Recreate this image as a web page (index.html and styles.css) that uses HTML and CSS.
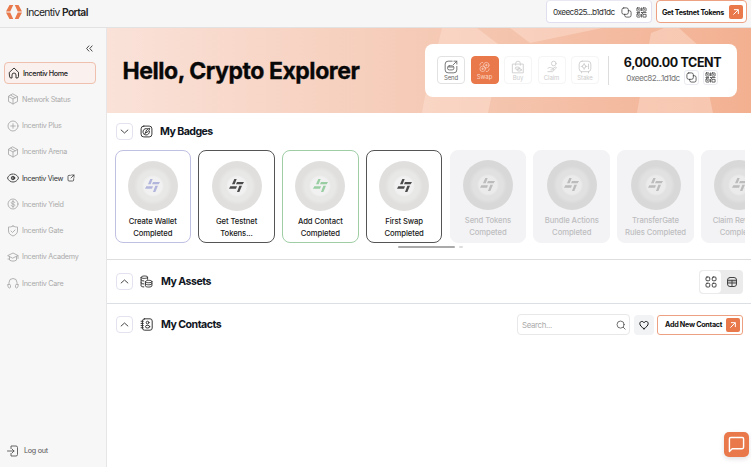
FILE: index.html
```html
<!DOCTYPE html>
<html lang="en">
<head>
<meta charset="utf-8">
<title>Incentiv Portal</title>
<link rel="stylesheet" href="styles.css">
</head>
<body>
<svg class="defs" aria-hidden="true">
  <symbol id="cube" viewBox="0 0 24 24"><path d="M12 2l9 5v10l-9 5-9-5V7zM3 7l9 5 9-5M12 12v10M7.500 4.500l9 5"/></symbol>
  <symbol id="home" viewBox="0 0 24 24"><path d="M3 10.500L12 2l9 8.500V19a3 3 0 0 1-3 3h-2v-6a4 4 0 0 0-8 0v6H6a3 3 0 0 1-3-3z"/></symbol>
  <symbol id="plus" viewBox="0 0 24 24"><circle cx="12" cy="12" r="10"/><path d="M12 7.500v9M7.500 12h9"/></symbol>
  <symbol id="eye" viewBox="0 0 24 24"><path d="M1 12c2-5 6-8 11-8s9 3 11 8c-2 5-6 8-11 8S3 17 1 12z" stroke-dasharray="15 2"/><circle cx="12" cy="12" r="3.500"/><circle cx="12" cy="12" r="1"/></symbol>
  <symbol id="dollar" viewBox="0 0 24 24"><circle cx="12" cy="12" r="10"/><path d="M15.500 9c-.5-1.500-2-2-3.500-2-2 0-3.500 1-3.500 2.500 0 3.500 7 1.500 7 5 0 1.500-1.500 2.500-3.500 2.500s-3.500-1-3.500-2.500M12 5v14"/></symbol>
  <symbol id="shield" viewBox="0 0 24 24"><path d="M12 2c3 2 6 2 9 2v8c0 5-4 8-9 10-5-2-9-5-9-10V4c3 0 6 0 9-2zM8 12l3 3 5-5"/></symbol>
  <symbol id="academy" viewBox="0 0 24 24"><path d="M2 9l10-5 10 5-10 5zM5 11v7c4 3 10 3 14 0v-7M22 9v6M2 16h3"/></symbol>
  <symbol id="care" viewBox="0 0 24 24"><path d="M4 15v-4a8 8 0 0 1 16 0v4M2 15h3c2 0 2 1 2 2v3c0 1-1 2-2 2s-3-1-3-3zM22 15h-3c-2 0-2 1-2 2v3c0 1 1 2 2 2s3-1 3-3z"/></symbol>
  <symbol id="external" viewBox="0 0 24 24"><path d="M10 4H6a3 3 0 0 0-3 3v11a3 3 0 0 0 3 3h11a3 3 0 0 0 3-3v-4M14 3h7v7M21 3l-9 9"/></symbol>
  <symbol id="logout" viewBox="0 0 24 24"><path d="M8 7V2h10a3 3 0 0 1 3 3v14a3 3 0 0 1-3 3H8v-5M1 12h13M10 8l4 4-4 4"/></symbol>
  <symbol id="copy" viewBox="0 0 24 24"><rect x="2" y="2" width="14" height="14" rx="4"/><path d="M16 8h2a4 4 0 0 1 4 4v6a4 4 0 0 1-4 4h-6a4 4 0 0 1-4-4v-2"/></symbol>
  <symbol id="qr" viewBox="0 0 24 24"><rect x="2" y="2" width="7" height="7" rx="1"/><rect x="15" y="2" width="7" height="7" rx="1"/><rect x="2" y="15" width="7" height="7" rx="1"/><path d="M12 2v6M12 12h10M2 12h6M12 16v6M16 16h6v6h-6zM5 5h1M18 5h1M5 18h1M12 12l3 3"/></symbol>
  <symbol id="arrow" viewBox="0 0 24 24"><path d="M5 19L18 6M7 5h12v12"/></symbol>
  <symbol id="down" viewBox="0 0 24 24"><path d="M3 8l9 8 9-8"/></symbol>
  <symbol id="up" viewBox="0 0 24 24"><path d="M3 16l9-8 9 8"/></symbol>
  <symbol id="collapse" viewBox="0 0 24 24"><path d="M10 3l-8 9 8 9M21 3l-8 9 8 9"/></symbol>
  <symbol id="badge" viewBox="0 0 24 24"><rect x="2" y="2" width="20" height="20" rx="5"/><path d="M14 7a6 6 0 1 0 3.500 5M8 17l3-3M10.500 14c0-4 3-7 7.500-8-1 5-4 8-7.500 8z"/></symbol>
  <symbol id="assets" viewBox="0 0 24 24"><path d="M2 4c0-3 12-3 12 0s-12 3-12 0v16c0 1 2 2 5 2M14 4v4M2 9c0 1 2 2 5 2M2 14.500c0 1 2 2 5 2"/><path d="M10 12c0-3 12-3 12 0s-12 3-12 0v8c0 3 12 3 12 0v-8M10 16c0 3 12 3 12 0"/></symbol>
  <symbol id="contacts" viewBox="0 0 24 24"><rect x="4.500" y="1.500" width="18" height="21" rx="4"/><path d="M2 6h4M2 10h4M2 14h4M2 18h4"/><circle cx="14" cy="8.500" r="2.500"/><ellipse cx="14" cy="16" rx="4" ry="2.500"/></symbol>
  <symbol id="grid" viewBox="0 0 24 24"><rect x="2" y="2" width="7.500" height="7.500" rx="2"/><rect x="14.500" y="2" width="7.500" height="7.500" rx="2"/><rect x="2" y="14.500" width="7.500" height="7.500" rx="2"/><rect x="14.500" y="14.500" width="7.500" height="7.500" rx="2"/></symbol>
  <symbol id="table" viewBox="0 0 24 24"><path d="M3 8h18v5H3z" fill="currentColor" fill-opacity=".3" stroke="none"/><rect x="3" y="3" width="18" height="18" rx="5"/><path d="M3 8.500h18M3 14h18M12 8.500V21"/></symbol>
  <symbol id="search" viewBox="0 0 24 24"><circle cx="11" cy="11" r="8.500"/><path d="M17.500 17.500L22 22"/></symbol>
  <symbol id="heart" viewBox="0 0 24 24"><path d="M12 21C6 17 2 13 2 8.500 2 3 9 1.500 12 6.500 15 1.500 22 3 22 8.500 22 13 18 17 12 21z"/></symbol>
  <symbol id="chat" viewBox="0 0 24 24"><path d="M2 22V4a2 2 0 0 1 2-2h16a2 2 0 0 1 2 2v12a2 2 0 0 1-2 2H6z"/></symbol>
  <symbol id="send" viewBox="0 0 24 24"><path d="M14 2H7a5 5 0 0 0-5 5v10a5 5 0 0 0 5 5h10a5 5 0 0 0 5-5v-6M16 8l6-6M17 2h5v5"/><rect x="6" y="10" width="11" height="7" rx="3"/><path d="M7 12h9"/></symbol>
  <symbol id="swap" viewBox="0 0 24 24"><circle cx="16" cy="8" r="6"/><circle cx="8" cy="16" r="6"/><path d="M2 8c0-4 2-6 6-6M16 22c4 0 6-2 6-6M14 8h4M6 16h4M16 6v4M8 14v4"/></symbol>
  <symbol id="buy" viewBox="0 0 24 24"><path d="M3 7h18v15H3zM8 9V6a4 4 0 0 1 8 0v3"/><ellipse cx="11" cy="14" rx="4" ry="2"/><ellipse cx="14" cy="17" rx="4" ry="2"/></symbol>
  <symbol id="claim" viewBox="0 0 24 24"><circle cx="15" cy="6" r="4"/><path d="M5 14c4-3 6 0 8 0s3 3 0 3h-3M13 15l5-3c2 0 2 2 0 3l-5 5H5"/></symbol>
  <symbol id="stake" viewBox="0 0 24 24"><rect x="2" y="2" width="20" height="18" rx="5"/><circle cx="10.500" cy="11" r="3"/><path d="M10.500 6v2M10.500 14v2M5.500 11h2M13.500 11h2M18 7v8M6 20v2M18 20v2"/></symbol>
  <symbol id="spark" viewBox="0 0 45 39"><path d="M16 0h7l-6 16h-8zM24 9h21l-4 7H21zM4 22h20l-3 7H0zM31 20h8l-8 19h-7z"/></symbol>
</svg>

<header class="topbar">
  <div class="brand">
    <svg class="brand-mark" viewBox="0 0 32 28"><path d="M7 0h7.500L8.500 13.200H0zM17.500 0H25l7 13.200h-8.500zM0 14.800h8.500l6 13.200H7zM23.500 14.800H32L25 28h-7.500z"/></svg>
    <span class="brand-name">Incentiv <b>Portal</b></span>
  </div>
  <div class="address-box"><span>0xeec825...b1d1dc</span><svg class="icon"><use href="#copy"/></svg><svg class="icon"><use href="#qr"/></svg></div>
  <button class="cta testnet"><span>Get Testnet Tokens</span><i><svg class="icon"><use href="#arrow"/></svg></i></button>
</header>

<div class="layout">
  <aside class="sidebar">
    <svg class="icon collapse"><use href="#collapse"/></svg>
    <nav>
      <a class="item active"><svg class="icon"><use href="#home"/></svg><span>Incentiv Home</span></a>
      <a class="item"><svg class="icon"><use href="#cube"/></svg><span>Network Status</span></a>
      <a class="item"><svg class="icon"><use href="#plus"/></svg><span>Incentiv Plus</span></a>
      <a class="item"><svg class="icon"><use href="#cube"/></svg><span>Incentiv Arena</span></a>
      <a class="item enabled"><svg class="icon"><use href="#eye"/></svg><span>Incentiv View</span><svg class="icon ext"><use href="#external"/></svg></a>
      <a class="item"><svg class="icon"><use href="#dollar"/></svg><span>Incentiv Yield</span></a>
      <a class="item"><svg class="icon"><use href="#shield"/></svg><span>Incentiv Gate</span></a>
      <a class="item"><svg class="icon"><use href="#academy"/></svg><span>Incentiv Academy</span></a>
      <a class="item"><svg class="icon"><use href="#care"/></svg><span>Incentiv Care</span></a>
    </nav>
    <a class="item logout"><svg class="icon"><use href="#logout"/></svg><span>Log out</span></a>
  </aside>

  <main>
    <section class="hero">
      <svg class="hero-art" viewBox="0 0 644 85" preserveAspectRatio="none"><path d="M335 0h35l25 19-14 66h-66l2-12zM403 0h92l-72 15zM557 0h15l20 18 14 67h-76l14-80z"/></svg>
      <h1>Hello, Crypto Explorer</h1>
      <div class="wallet">
        <div class="actions">
          <button class="action"><svg class="icon"><use href="#send"/></svg><span>Send</span></button>
          <button class="action primary"><svg class="icon"><use href="#swap"/></svg><span>Swap</span></button>
          <button class="action off"><svg class="icon"><use href="#buy"/></svg><span>Buy</span></button>
          <button class="action off"><svg class="icon"><use href="#claim"/></svg><span>Claim</span></button>
          <button class="action off"><svg class="icon"><use href="#stake"/></svg><span>Stake</span></button>
        </div>
        <div class="balance">
          <strong>6,000.00 TCENT</strong>
          <div class="balance-address"><span>0xeec82...1d1dc</span><i><svg class="icon"><use href="#copy"/></svg></i><i><svg class="icon"><use href="#qr"/></svg></i></div>
        </div>
      </div>
    </section>

    <section class="badges">
      <div class="section-head"><button class="toggle"><svg class="icon"><use href="#down"/></svg></button><svg class="icon title-icon"><use href="#badge"/></svg><h2>My Badges</h2></div>
      <div class="badge-row">
        <article class="card violet"><div class="medal"><svg><use href="#spark"/></svg></div><p>Create Wallet<br>Completed</p></article>
        <article class="card dark"><div class="medal"><svg><use href="#spark"/></svg></div><p>Get Testnet<br>Tokens...</p></article>
        <article class="card green"><div class="medal"><svg><use href="#spark"/></svg></div><p>Add Contact<br>Completed</p></article>
        <article class="card dark"><div class="medal"><svg><use href="#spark"/></svg></div><p>First Swap<br>Completed</p></article>
        <article class="card locked"><div class="medal"><svg><use href="#spark"/></svg></div><p>Send Tokens<br>Competed</p></article>
        <article class="card locked"><div class="medal"><svg><use href="#spark"/></svg></div><p>Bundle Actions<br>Completed</p></article>
        <article class="card locked"><div class="medal"><svg><use href="#spark"/></svg></div><p>TransferGate<br>Rules Completed</p></article>
        <article class="card locked"><div class="medal"><svg><use href="#spark"/></svg></div><p>Claim Rewards<br>Completed</p></article>
      </div>
      <div class="pager"><span></span><span class="dot"></span></div>
    </section>

    <section class="assets">
      <div class="section-head"><button class="toggle"><svg class="icon"><use href="#up"/></svg></button><svg class="icon title-icon"><use href="#assets"/></svg><h2>My Assets</h2></div>
      <div class="view-switch"><span class="on"><svg class="icon"><use href="#grid"/></svg></span><span><svg class="icon"><use href="#table"/></svg></span></div>
    </section>

    <section class="contacts">
      <div class="section-head"><button class="toggle"><svg class="icon"><use href="#up"/></svg></button><svg class="icon title-icon"><use href="#contacts"/></svg><h2>My Contacts</h2></div>
      <div class="search"><span>Search...</span><svg class="icon"><use href="#search"/></svg></div>
      <button class="favorite"><svg class="icon"><use href="#heart"/></svg></button>
      <button class="cta add"><span>Add New Contact</span><i><svg class="icon"><use href="#arrow"/></svg></i></button>
    </section>
  </main>
</div>
<button class="chat"><svg class="icon"><use href="#chat"/></svg></button>
</body>
</html>
```
FILE: styles.css
```css
* { box-sizing: border-box; }
body { margin: 0; width: 751px; height: 467px; overflow: hidden; display: flex; flex-direction: column; background: #fff; color: #111; font-family: Inter, "Liberation Sans", sans-serif; }
button { font: inherit; color: inherit; padding: 0; margin: 0; border: 0; background: none; }
h1, h2, p { margin: 0; }
span, strong, h1, h2 { white-space: nowrap; }
.defs { position: absolute; width: 0; height: 0; }
.icon { display: block; flex: none; width: 12px; height: 12px; fill: none; stroke: currentColor; stroke-width: 1.8; stroke-linecap: round; stroke-linejoin: round; }

.topbar { flex: none; height: 28px; display: flex; align-items: flex-start; padding-right: 4px; background: #f6f6f6; border-bottom: 1px solid #e2e2e2; }
.brand { display: flex; align-items: center; height: 23px; padding-left: 6px; gap: 4px; margin-right: auto; }
.brand-mark { width: 16px; height: 14px; fill: #e9784a; }
.brand-name { font-size: 10.300px; letter-spacing: -0.600px; color: #222; }
.brand-name b { font-weight: 600; }
.address-box { width: 106px; height: 23px; margin-right: 4px; padding: 1px 0 0 6px; display: flex; align-items: center; background: #fff; border: 1px solid #dfdff0; border-top-color: #e8e8f2; border-radius: 4px; font-size: 8.200px; letter-spacing: -0.600px; color: #333; }
.address-box span { width: 70px; }
.address-box .icon { width: 11px; height: 11px; margin-right: 4px; stroke-width: 1.600; }
.cta { display: flex; align-items: center; justify-content: space-between; background: #fff; border: 1px solid #eda182; border-radius: 4px; font-weight: 700; color: #111; }
.cta i { display: grid; place-items: center; width: 14px; height: 14px; background: #e9784a; color: #fff; border-radius: 2px; }
.cta .icon { width: 8px; height: 8px; stroke-width: 3; }
.testnet { width: 91px; height: 23px; padding: 1px 3px 0 5px; font-size: 7.200px; letter-spacing: -0.320px; }

.layout { flex: 1; display: flex; min-height: 0; }
.sidebar { flex: none; width: 107px; display: flex; flex-direction: column; background: #f7f7f7; border-right: 1px solid #e6e6e6; }
.collapse { width: 7px; height: 7px; margin: 17px 0 10px 86px; stroke-width: 3; color: #333; }
.item { display: flex; align-items: center; width: 92px; height: 22.250px; margin: 0 0 4px 4px; padding-left: 3px; gap: 3px; font-size: 7.200px; letter-spacing: -0.280px; color: #aaa; border-radius: 4px; }
.item.active { color: #222; background: #faf0ed; border: 1px solid #efc0ad; font-weight: 500; letter-spacing: -0.380px; }
.item.enabled { color: #333; letter-spacing: -0.350px; }
.item .ext { width: 8px; height: 8px; margin-left: 1px; stroke-width: 2.200; }
.logout { margin-top: auto; margin-bottom: 5px; gap: 5px; color: #555; }

main { flex: 1; min-width: 0; }
.hero { position: relative; height: 85px; display: flex; align-items: center; justify-content: space-between; padding: 0 14px 0 15.500px; background: linear-gradient(90deg, #fae2d9, #f5c9b4 52%, #f3b091); }
.hero-art { position: absolute; inset: 0; width: 100%; height: 100%; fill: rgba(255, 232, 220, .38); }
h1 { position: relative; font-size: 23px; font-weight: 700; letter-spacing: -0.450px; line-height: 28px; color: #080808; -webkit-text-stroke: .35px #080808; }
.wallet { position: relative; width: 312px; height: 53px; display: flex; align-items: center; padding-left: 12px; background: #fff; border-radius: 8px; }
.actions { display: flex; gap: 5.500px; padding-right: 9px; border-right: 1px solid #ddd; height: 29px; }
.action { width: 28px; height: 28px; padding-top: 2px; display: flex; flex-direction: column; align-items: center; justify-content: center; gap: 0; border: 1px solid #e2e2e2; border-radius: 4px; font-size: 6px; line-height: 8px; letter-spacing: -0.100px; color: #666; }
.action .icon { width: 14px; height: 14px; stroke-width: 1.500; }
.action.primary { background: #e9784a; border-color: #e9784a; color: #fbd5c4; }
.action.primary .icon { width: 11px; height: 12px; }
.action.off { color: #ccc; border-color: #f5f5f5; }
.balance { flex: 1; display: flex; flex-direction: column; align-items: center; padding-right: 1px; color: #111; }
.balance strong { font-size: 12.500px; line-height: 14px; letter-spacing: -0.380px; }
.balance-address { display: flex; align-items: center; gap: 4px; margin-left: -1px; font-size: 8.200px; letter-spacing: -0.540px; color: #777; }
.balance-address i { width: 15px; height: 15px; display: grid; place-items: center; border: 1px solid #eaeaf0; border-radius: 3px; color: #333; }
.balance-address .icon { width: 11px; height: 11px; stroke-width: 1.600; }

.section-head { display: flex; align-items: center; margin-right: auto; }
.toggle { width: 17px; height: 17px; display: grid; place-items: center; border: 1px solid #e2e2f0; border-radius: 4px; color: #333; }
.toggle .icon { width: 9px; height: 9px; stroke-width: 2.400; }
.title-icon { width: 13px; height: 13px; margin: 0 7px; color: #333; }
h2 { font-size: 10.600px; font-weight: 700; letter-spacing: -0.550px; line-height: 17px; color: #101522; }
.assets h2, .contacts h2 { margin-left: 1px; letter-spacing: -0.520px; }
.badges { height: 147px; padding: 10px 6px 0 7.500px; border-bottom: 1px solid #dedede; }
.badges .section-head { padding-left: 1.500px; height: 17px; }
.badge-row { display: flex; gap: 7.300px; margin-top: 9.500px; overflow: hidden; }
.card { flex: none; width: 76.500px; height: 93.500px; padding-top: 10px; display: flex; flex-direction: column; align-items: center; border: 1px solid; border-radius: 8px; }
.violet { border-color: #bfc0e2; }
.dark { border-color: #555; }
.green { border-color: #9fcea5; }
.locked { background: #f3f3f5; border-color: #f3f3f5; padding-top: 9px; }
.medal { flex: none; width: 50px; height: 50px; display: grid; place-items: center; border-radius: 50%; background: radial-gradient(circle, #f1f1f1 0 9px, #e8e8e7 11px 15px, #e0dfde 19px); }
.medal svg { width: 15px; height: 13px; fill: #4b4b4b; }
.violet .medal svg { fill: #b2b5dc; }
.green .medal svg { fill: #98cea1; }
.locked .medal { background: radial-gradient(circle, #ebebeb 0 9px, #e1e1e1 11px 15px, #d9d8d8 19px); }
.locked .medal svg { fill: #bcbcbc; }
.card p { margin-top: 5px; text-align: center; white-space: nowrap; font-size: 7.700px; line-height: 12px; letter-spacing: -0.100px; font-weight: 500; color: #1a1a1a; }
.locked p { color: #bdbdc0; }
.pager { display: flex; gap: 4px; margin: 2.500px 0 0 283px; }
.pager span { width: 57px; height: 2px; border-radius: 1px; background: #aaa; }
.pager .dot { width: 4px; background: #ddd; }

.assets, .contacts { display: flex; align-items: center; padding: 0 8px 0 9px; }
.assets { height: 44px; border-bottom: 1px solid #dcdfe3; }
.contacts { height: 41px; }
.view-switch { display: flex; width: 44px; height: 24px; padding: 1px; background: #ebebeb; border-radius: 4px; }
.view-switch span { flex: 1; display: grid; place-items: center; color: #444; border-radius: 4px; }
.view-switch .on { background: #fff; }
.view-switch .icon { width: 12px; height: 12px; stroke-width: 2; }
.search { width: 113px; height: 21px; display: flex; align-items: center; justify-content: space-between; padding: 0 3px 0 4px; border: 1px solid #e8e8ea; border-radius: 4px; font-size: 7.800px; letter-spacing: -0.300px; color: #aaa; }
.search .icon { width: 10px; height: 10px; stroke-width: 2; color: #555; }
.favorite { width: 20px; height: 20px; margin: 0 3px 0 4px; display: grid; place-items: center; background: #f2f3f5; border-radius: 4px; }
.favorite .icon { width: 10px; height: 10px; stroke-width: 2.400; }
.add { width: 86px; height: 20px; padding: 0 2px 0 7px; font-size: 7.200px; letter-spacing: -0.280px; border-radius: 3px; }

.chat { position: absolute; right: 2px; bottom: 10px; width: 25px; height: 25px; display: grid; place-items: center; color: #fff; background: #e9784a; border-radius: 5px; box-shadow: 0 2px 5px rgba(0, 0, 0, .12); }
.chat .icon { width: 17px; height: 17px; stroke-width: 2; }
```
